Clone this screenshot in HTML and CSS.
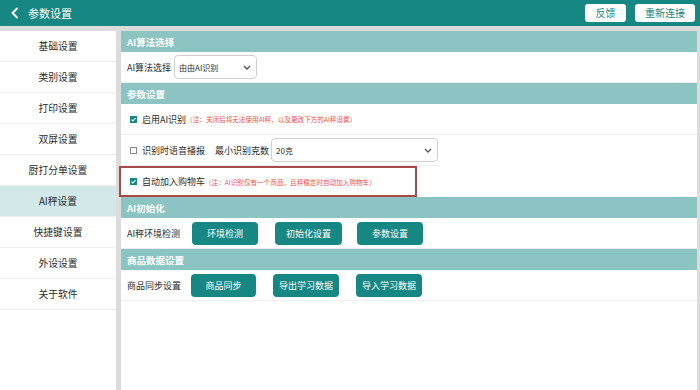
FILE: index.html
```html
<!DOCTYPE html>
<html>
<head>
<meta charset="utf-8">
<link rel="stylesheet" href="styles.css">
</head>
<body>
<div class="app">
  <header class="topbar">
    <div class="title">
      <svg class="back" width="10" height="12" viewBox="0 0 10 12"><path d="M7 1.5 L2.5 6 L7 10.5" fill="none" stroke="#fff" stroke-width="2" stroke-linecap="round" stroke-linejoin="round"/></svg>
      <span>参数设置</span>
    </div>
    <div class="top-actions">
      <button class="top-btn btn-fb">反馈</button>
      <button class="top-btn btn-re">重新连接</button>
    </div>
  </header>
  <div class="body">
    <nav class="sidebar">
      <div class="nav-item">基础设置</div>
      <div class="nav-item">类别设置</div>
      <div class="nav-item">打印设置</div>
      <div class="nav-item">双屏设置</div>
      <div class="nav-item">厨打分单设置</div>
      <div class="nav-item active">AI秤设置</div>
      <div class="nav-item">快捷键设置</div>
      <div class="nav-item">外设设置</div>
      <div class="nav-item">关于软件</div>
    </nav>
    <main class="content">
      <div class="sec-head">AI算法选择</div>
      <div class="row">
        <span class="label">AI算法选择</span>
        <div class="select sel-algo"><span>由由AI识别</span><svg class="chev" width="8" height="5" viewBox="0 0 8 5"><path d="M1 1 L4 4 L7 1" fill="none" stroke="#555" stroke-width="1.3"/></svg></div>
      </div>
      <div class="sec-head">参数设置</div>
      <div class="row">
        <span class="cb checked"><svg width="7" height="7" viewBox="0 0 7 7"><path d="M1.5 3.6 L2.9 5 L5.6 2" fill="none" stroke="#fff" stroke-width="1.1"/></svg></span>
        <span class="label">启用AI识别</span>
        <span class="note">（注：关闭后将无法使用AI秤，以及更改下方的AI秤设置）</span>
      </div>
      <div class="row row-short">
        <span class="cb"></span>
        <span class="label">识别时语音播报</span>
        <span class="label label-min">最小识别克数</span>
        <div class="select sel-gram"><span>20克</span><svg class="chev" width="8" height="5" viewBox="0 0 8 5"><path d="M1 1 L4 4 L7 1" fill="none" stroke="#555" stroke-width="1.3"/></svg></div>
      </div>
      <div class="row row-mark">
        <span class="cb checked"><svg width="7" height="7" viewBox="0 0 7 7"><path d="M1.5 3.6 L2.9 5 L5.6 2" fill="none" stroke="#fff" stroke-width="1.1"/></svg></span>
        <span class="label">自动加入购物车</span>
        <span class="note">（注：AI识别仅有一个商品，且秤稳定时自动加入购物车）</span>
      </div>
      <div class="sec-head">AI初始化</div>
      <div class="row">
        <span class="label lbl-w">AI秤环境检测</span>
        <div class="btns">
          <button class="btn">环境检测</button>
          <button class="btn b-wide">初始化设置</button>
          <button class="btn b-gap">参数设置</button>
        </div>
      </div>
      <div class="sec-head">商品数据设置</div>
      <div class="row">
        <span class="label lbl-w2">商品同步设置</span>
        <div class="btns">
          <button class="btn b-narrow">商品同步</button>
          <button class="btn">导出学习数据</button>
          <button class="btn">导入学习数据</button>
        </div>
      </div>
    </main>
  </div>
</div>
</body>
</html>
```

FILE: styles.css
```css
* { box-sizing: border-box; }
html, body { margin: 0; padding: 0; }
body {
  width: 700px;
  height: 390px;
  overflow: hidden;
  background: #dcdcdc;
  font-family: "Noto Sans CJK SC", "Noto Sans", sans-serif;
  color: #2b2b2b;
}
.app { display: flex; flex-direction: column; height: 390px; }
.topbar {
  height: 26px;
  background: #178784;
  display: flex;
  align-items: center;
  justify-content: space-between;
  padding: 0 5px 0 10px;
  flex-shrink: 0;
}
.title { display: flex; align-items: center; gap: 8px; color: #fff; font-size: 11px; }
.back { display: block; }
.top-actions { display: flex; gap: 9px; }
.top-btn {
  height: 18px;
  background: #fff;
  border: none;
  border-radius: 3px;
  color: #178784;
  font-family: inherit;
  font-size: 10px;
  padding: 0;
  line-height: 18px;
}
.btn-fb { width: 41px; }
.btn-re { width: 60px; }
.body { display: flex; flex: 1; margin-top: 5px; gap: 5px; padding-right: 3px; }
.sidebar { width: 116px; background: #fff; display: flex; flex-direction: column; }
.nav-item {
  height: 31px;
  display: flex;
  align-items: center;
  justify-content: center;
  font-size: 9.8px;
  color: #2b2b2b;
  border-bottom: 1px solid #eeeeee;
}
.nav-item.active { background: #d3e8e8; }
.content { flex: 1; background: #fff; display: flex; flex-direction: column; }
.sec-head {
  height: 21px;
  background: #8bc4c3;
  color: #fff;
  font-weight: bold;
  font-size: 9.5px;
  display: flex;
  align-items: center;
  padding-left: 6px;
}
.row {
  height: 31px;
  display: flex;
  align-items: center;
  padding-left: 6px;
  border-bottom: 1px solid #eeeeee;
  font-size: 9px;
}
.row-short { width: 319px; }
.row-mark {
  width: 298px;
  margin-left: -2px;
  border: 2px solid #a94a4a;
  padding-left: 6px;
}
.label { white-space: nowrap; }
.label-min { margin-left: 10px; }
.select {
  height: 24px;
  border: 1px solid #cfcfcf;
  border-radius: 4px;
  display: flex;
  align-items: center;
  justify-content: space-between;
  padding: 0 5px 0 4px;
  margin-left: 3px;
  font-size: 8px;
}
.sel-algo { width: 83px; }
.sel-gram { width: 167px; margin-left: 2px; }
.chev { display: block; }
.cb {
  width: 7px;
  height: 7px;
  border: 1px solid #888;
  margin-right: 5px;
  margin-left: 3px;
  display: flex;
  flex-shrink: 0;
}
.cb.checked { background: #178784; border-color: #178784; }
.cb svg { display: block; margin: -1px; }
.note { color: #f04d4a; font-size: 6.6px; white-space: nowrap; }
.lbl-w { width: 65px; }
.lbl-w2 { width: 64px; }
.btns { display: flex; gap: 17px; }
.btn {
  width: 66px;
  height: 23px;
  background: #178784;
  border: none;
  border-radius: 4px;
  color: #fff;
  font-family: inherit;
  font-size: 9px;
  padding: 0;
}
.b-wide { width: 67px; }
.b-gap { margin-left: -2px; }
.b-narrow { width: 65px; }
```
